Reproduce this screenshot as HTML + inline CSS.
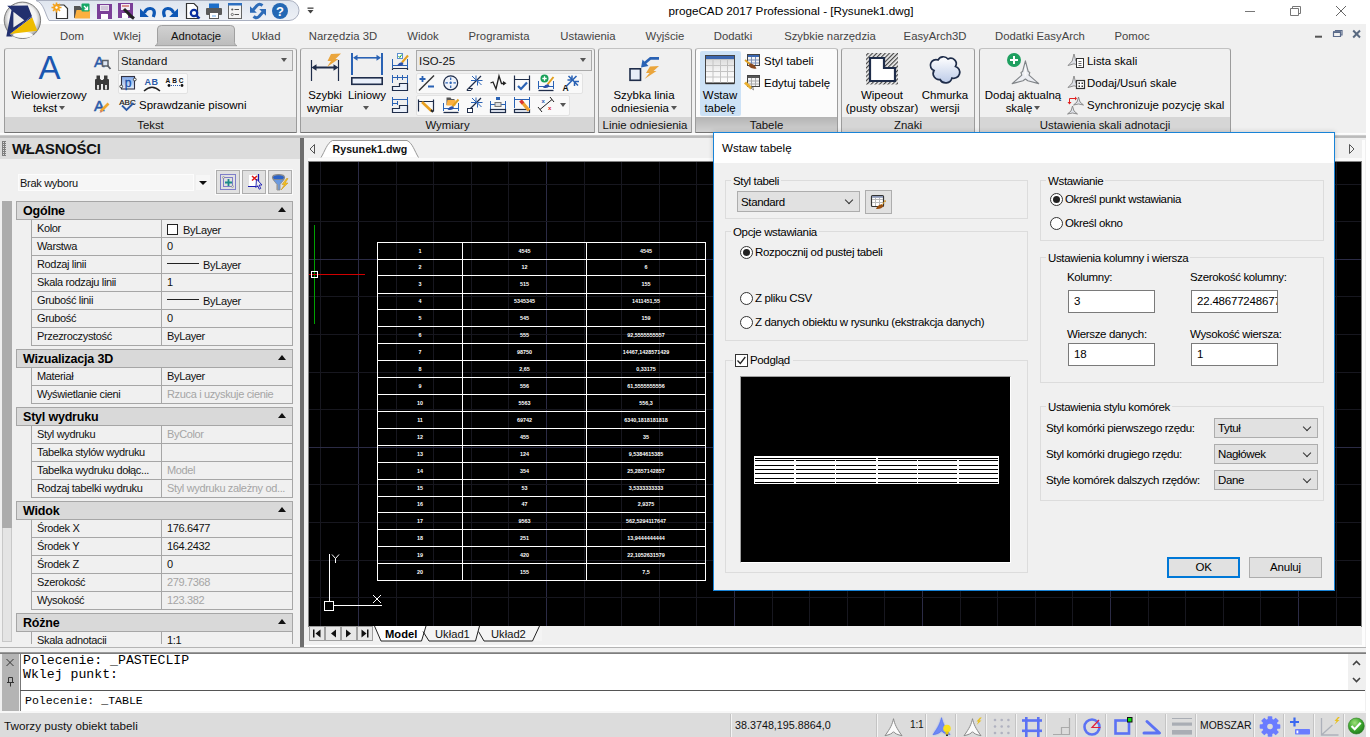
<!DOCTYPE html>
<html><head><meta charset="utf-8">
<style>
*{box-sizing:border-box;margin:0;padding:0}
html,body{width:1370px;height:737px;overflow:hidden;background:#f0f0f0;font-family:"Liberation Sans",sans-serif;font-size:12px;color:#1e1e1e}
.abs{position:absolute}
#titlebar{position:absolute;left:0;top:0;width:1370px;height:24px;background:#fff}
#title{position:absolute;left:0;top:4px;width:1582px;text-align:center;font-size:11.7px;color:#000}
#tabsrow{position:absolute;left:0;top:24px;width:1370px;height:24px;background:#f0f0f0}
.rtab{position:absolute;top:30px;font-size:11.3px;color:#444;transform:translateX(-50%);white-space:nowrap}
#ribbon{position:absolute;left:0;top:47px;width:1370px;height:88px;background:#f0f0f0}
.grp{position:absolute;top:48px;height:85px;border:1px solid #9c9c9c;border-top-color:#c2c2c2;border-bottom-color:#747474;border-radius:3px 3px 1px 1px;background:#f0f0f0}
.grp .lbl{position:absolute;left:0;right:0;bottom:0;height:15px;background:#d6d6d6;text-align:center;font-size:11.4px;line-height:16px;color:#111;white-space:nowrap}
.rt{position:absolute;font-size:11.45px;white-space:nowrap;color:#000;line-height:14px}
.rtc{text-align:center;transform:translateX(-50%)}

.darr{position:absolute;width:0;height:0;border-left:3.5px solid transparent;border-right:3.5px solid transparent;border-top:4px solid #555}
.combo{position:absolute;border:1px solid #a9a9a9;background:#e9e9e9;font-size:11.4px;line-height:21px;padding-left:2px;color:#111;white-space:nowrap}
.combo i{position:absolute;right:5px;top:7px;width:0;height:0;border-left:3.5px solid transparent;border-right:3.5px solid transparent;border-top:4px solid #555}
.strip{position:absolute;border:1px solid #e2e2e2;background:#f9f9f9;border-radius:2px}

#pgrid{position:absolute;left:0;top:0;width:300px;height:644px;overflow:hidden;font-size:11px}
.pcat{position:absolute;left:16px;width:277px;height:19px;background:#d9d9d9;border:1px solid #a6a6a6;font-weight:bold;font-size:12.5px;line-height:19px;padding-left:6px;color:#000;letter-spacing:-.2px}
.pcat i{position:absolute;right:6px;top:5px;width:0;height:0;border-left:4px solid transparent;border-right:4px solid transparent;border-bottom:5px solid #111}
.pn{position:absolute;left:31px;width:131px;height:19px;border:1px solid #a6a6a6;background:#f0f0f0;line-height:17px;padding-left:5px;white-space:nowrap;overflow:hidden;color:#111;font-size:11px;letter-spacing:-.35px}
.pv{position:absolute;left:161px;width:132px;height:19px;border:1px solid #a6a6a6;background:#f0f0f0;line-height:17px;padding-left:5px;white-space:nowrap;overflow:hidden;color:#111;font-size:11px;letter-spacing:-.35px}
.pv.dis{color:#a5a5a5}
.sw{display:inline-block;width:11px;height:11px;border:1px solid #222;background:#fff;vertical-align:-2px;margin-right:5px;position:relative;top:.5px}
.ln{display:inline-block;width:32px;height:1px;background:#222;vertical-align:4px;margin-right:4px}
.pbtn{position:absolute;top:170px;width:24px;height:24px;border:1px solid #adadad;background:#e1e1e1;box-shadow:0 0 0 1px #fafafa}

#dlg{font-size:11px;color:#000}
.gb{position:absolute;border:1px solid #dcdcdc}
.gb span{position:absolute;left:5px;top:-7px;background:#f0f0f0;padding:0 2px;font-size:11.5px;line-height:14px;white-space:nowrap;letter-spacing:-.35px}
.dt{position:absolute;font-size:11.5px;line-height:14px;white-space:nowrap;letter-spacing:-.35px}
.dcombo{position:absolute;border:1px solid #adadad;background:#e1e1e1;font-size:11.5px;padding-left:3px;line-height:20px;letter-spacing:-.35px}
.dcombo:after{content:"";position:absolute;right:7px;top:5px;width:5px;height:5px;border-right:1px solid #333;border-bottom:1px solid #333;transform:rotate(45deg)}
.dbtn{position:absolute;border:1px solid #adadad;background:#e1e1e1;text-align:center;font-size:11.5px;letter-spacing:-.2px}
.radio{position:absolute;width:13px;height:13px;border:1px solid #333;border-radius:50%;background:#fff}
.radio.on:after{content:"";position:absolute;left:2px;top:2px;width:7px;height:7px;border-radius:50%;background:#222}
.din{position:absolute;width:87px;height:23px;border:1px solid #7a7a7a;background:#fff;font-size:11.5px;line-height:20px;padding-left:5px;overflow:hidden;white-space:nowrap;letter-spacing:-.2px}

.ssep{position:absolute;top:714px;width:2px;height:23px;border-left:1px solid #c4c4c4;border-right:1px solid #f4f4f4}
</style></head><body>
<div id="titlebar"></div>
<div id="title">progeCAD 2017 Professional - [Rysunek1.dwg]</div>
<div id="tabsrow"></div>
<div id="ribbon"></div>
<!-- QAT -->
<svg class="abs" style="left:0;top:0" width="330" height="48" viewBox="0 0 330 48">
 <defs>
  <linearGradient id="qg" x1="0" y1="0" x2="0" y2="1"><stop offset="0" stop-color="#dfe5ef"/><stop offset="1" stop-color="#eef1f6"/></linearGradient>
  <radialGradient id="lg" cx=".5" cy=".45" r=".55"><stop offset="0" stop-color="#fff"/><stop offset=".7" stop-color="#f4f4f4"/><stop offset=".88" stop-color="#bdbdbd"/><stop offset="1" stop-color="#8a8a8a"/></radialGradient>
 </defs>
 <path d="M36 .5 C44 3 45 14 49 20.500 L289 20.500 A10 10 0 0 0 289 .5 Z" fill="url(#qg)" stroke="#aab0c0" stroke-width="1"/>
 <circle cx="22.400" cy="20.300" r="18.200" fill="url(#lg)" stroke="#7d7d7d" stroke-width="1"/>
 <ellipse cx="23" cy="35" rx="10" ry="3" fill="#fff" opacity=".95"/>
 <path d="M7.200 5.700 L27.800 5.500 L31.900 16.100 L9.500 33.800 L12.800 36.400 L6.300 36.400 L11.500 10 Z" fill="#22306e"/>
 <path d="M13.400 11.800 L24.300 20.300 L13.400 27.600 Z" fill="#ececec"/>
 <path d="M9.600 34 L32.200 17.300 L37.300 30.700 Z" fill="#eebc00"/>
 <path d="M9.300 33.800 L32 16.700" stroke="#14248a" stroke-width="1" fill="none"/>
 <!-- new -->
 <path d="M57 5 H64 L67.500 8.500 V18.500 H56.500 V11" fill="#fff" stroke="#333" stroke-width="1.2"/>
 <g fill="#f5a21c"><circle cx="56.500" cy="7.500" r="3.200"/><path d="M56.500 2.500v10M51.500 7.500h10M53 4l7 7M60 4l-7 7" stroke="#f5a21c" stroke-width="1.600"/></g><circle cx="56.500" cy="7.500" r="1.200" fill="#fff"/>
 <!-- open -->
 <path d="M74 6 H80 L81.500 8 H85 V18 H74Z" fill="#555"/><path d="M76.500 10 H90 V18.500 H74.500Z" fill="#fbb040"/><rect x="81.500" y="3.500" width="8" height="8" rx="1" fill="#16a765"/><path d="M84 6 L87.500 9.500 M87.500 6.500 V9.500 H84.500" stroke="#fff" stroke-width="1.300" fill="none"/>
 <!-- save -->
 <rect x="97" y="4" width="15" height="15" fill="#7b3f98"/><rect x="100" y="5" width="9" height="6" fill="#e9e3ee"/><rect x="101" y="6.500" width="7" height="1" fill="#b9a9c6"/><rect x="101" y="8.500" width="7" height="1" fill="#b9a9c6"/><rect x="101" y="14" width="7" height="5" fill="#fff"/>
 <!-- saveas -->
 <rect x="118" y="3" width="15" height="15" fill="#7b3f98"/><rect x="121" y="4" width="9" height="6" fill="#f2ecf5"/><rect x="122" y="5.500" width="7" height="1" fill="#c0392b"/><rect x="122" y="13" width="6" height="5" fill="#fff"/><path d="M124 9 L132 17 L134 18.500" stroke="#222" stroke-width="3" fill="none"/>
 <!-- undo -->
 <path d="M153.300 17 C156 10.500 153 8.300 150 8.500 C147 8.700 145 10.500 144.500 13" fill="none" stroke="#0d57b5" stroke-width="3.200"/><path d="M140 8.500 L140 17 L148.800 17 Z" fill="#0d57b5"/>
 <!-- redo -->
 <path d="M164.700 17 C162 10.500 165 8.300 168 8.500 C171 8.700 173 10.500 173.500 13" fill="none" stroke="#0d57b5" stroke-width="3.200"/><path d="M178 8.500 L178 17 L169.200 17 Z" fill="#0d57b5"/>
 <!-- preview -->
 <path d="M186.500 3.500 H194 L197.500 7 V18.500 H186.500Z" fill="#fff" stroke="#333" stroke-width="1.200"/><circle cx="194" cy="13" r="3.200" fill="#fff" stroke="#0a2fa0" stroke-width="2.200"/><path d="M196.500 15.500 L199.500 18.500" stroke="#0a2fa0" stroke-width="2.400"/>
 <!-- print -->
 <rect x="209" y="3.500" width="10" height="5" fill="#1e6fc9"/><rect x="206" y="8" width="16" height="7" rx="1" fill="#5a5a5a"/><rect x="209.500" y="12.500" width="9" height="6" fill="#fff" stroke="#5a5a5a" stroke-width="1"/><rect x="212" y="15.500" width="4" height="1" fill="#6aa7e8"/>
 <!-- props -->
 <rect x="228.500" y="3.500" width="13" height="15" fill="#f4f4f4" stroke="#666" stroke-width="1"/><rect x="228" y="3" width="14" height="2.500" fill="#2d6fc0"/><circle cx="232.300" cy="9.500" r="1.100" fill="#555"/><circle cx="232.300" cy="14.500" r="1.100" fill="none" stroke="#555" stroke-width=".8"/><path d="M234.500 9.500h4.500M234.500 14.500h4.500" stroke="#555" stroke-width="1.200"/>
 <!-- sync -->
 <path d="M262.500 5.500 C260 3.500 258.500 4 257 5.500 L253 10" fill="none" stroke="#2d6bb8" stroke-width="3"/><path d="M250 6.200 L250 12.800 L256.800 12.800 Z" fill="#2d6bb8"/>
 <path d="M253.500 16.500 C256 18.500 257.500 18 259 16.500 L263 12" fill="none" stroke="#2d6bb8" stroke-width="3"/><path d="M266 15.700 L266 9.100 L259.200 9.100 Z" fill="#2d6bb8"/>
 <!-- help -->
 <circle cx="280" cy="11" r="8" fill="#2468b4"/><text x="280" y="15.600" font-family="Liberation Sans,sans-serif" font-weight="bold" font-size="13" fill="#fff" text-anchor="middle">?</text>
 <!-- dd -->
 <rect x="307.500" y="7.500" width="6" height="1.300" fill="#444"/><path d="M307.500 10 h6 l-3 3.500z" fill="#444"/>
</svg>
<!-- window controls -->
<svg class="abs" style="left:1230px;top:0" width="140" height="48" viewBox="0 0 140 48">
 <path d="M15 11.500h10" stroke="#777" stroke-width="1"/>
 <path d="M60.500 8.500h8v7h-8z M62.500 8.500v-2h8v7h-2" fill="none" stroke="#777" stroke-width="1"/>
 <path d="M106 6l10 10M116 6l-10 10" stroke="#666" stroke-width="1"/>
 <path d="M85 36.700h7" stroke="#555" stroke-width="2"/>
 <path d="M103.500 32.500h7v4h-7z" fill="none" stroke="#5a6a8a" stroke-width="1.200"/><path d="M103 32h8" stroke="#5a6a8a" stroke-width="1.800"/><path d="M105.500 31 v-.5 h6.500 v4.500 h-1.500" fill="none" stroke="#5a6a8a" stroke-width="1.200"/>
 <path d="M123.200 30.500l6.800 7M130 30.500l-6.800 7" stroke="#5a6a80" stroke-width="2"/>
</svg>
<!-- tabs -->
<svg class="abs" style="left:150px;top:23px" width="100" height="26" viewBox="0 0 100 26">
 <defs><linearGradient id="tg" x1="0" y1="0" x2="0" y2="1"><stop offset="0" stop-color="#d2d2d2"/><stop offset="1" stop-color="#bcbcbc"/></linearGradient></defs>
 <path d="M5 22.700 Q7.500 22.500 7.500 19.500 V6 Q7.500 2.500 11.500 2.500 H80.500 Q84.500 2.500 84.500 6 V19.500 Q84.500 22.500 87 22.700 Z" fill="url(#tg)" stroke="#a0a0a0" stroke-width="1"/>
</svg>
<div class="rtab" style="left:72px">Dom</div>
<div class="rtab" style="left:127px">Wklej</div>
<div class="rtab" style="left:196px;color:#111">Adnotacje</div>
<div class="rtab" style="left:266px">Układ</div>
<div class="rtab" style="left:343px">Narzędzia 3D</div>
<div class="rtab" style="left:423px">Widok</div>
<div class="rtab" style="left:499px">Programista</div>
<div class="rtab" style="left:588px">Ustawienia</div>
<div class="rtab" style="left:665px">Wyjście</div>
<div class="rtab" style="left:733px">Dodatki</div>
<div class="rtab" style="left:830px">Szybkie narzędzia</div>
<div class="rtab" style="left:935px">EasyArch3D</div>
<div class="rtab" style="left:1040px">Dodatki EasyArch</div>
<div class="rtab" style="left:1132px">Pomoc</div>

<!-- groups -->
<div class="grp" style="left:4px;width:293px"><div class="lbl">Tekst</div></div>
<div class="grp" style="left:300px;width:295px"><div class="lbl">Wymiary</div></div>
<div class="grp" style="left:598px;width:94px"><div class="lbl">Linie odniesienia</div></div>
<div class="grp" style="left:695px;width:143px;background:#fbfbfb"><div class="lbl" style="background:linear-gradient(#b4b4b4,#d2d2d2)">Tabele</div></div>
<div class="grp" style="left:841px;width:134px"><div class="lbl">Znaki</div></div>
<div class="grp" style="left:979px;width:252px"><div class="lbl">Ustawienia skali adnotacji</div></div>
<!-- Tekst group -->
<div class="rt rtc" style="left:49px;top:88px">Wielowierzowy</div>
<div class="rt rtc" style="left:45px;top:101px">tekst</div>
<div class="darr" style="left:59px;top:106px"></div>
<div class="combo" style="left:118px;top:50px;width:175px;height:21px">Standard<i></i></div>
<div class="strip" style="left:118px;top:73px;width:70px;height:21px"></div>
<div class="rt" style="left:139px;top:98px">Sprawdzanie pisowni</div>
<!-- Wymiary group -->
<div class="rt rtc" style="left:325px;top:88px">Szybki</div>
<div class="rt rtc" style="left:325px;top:101px">wymiar</div>
<div class="rt rtc" style="left:367px;top:88px">Liniowy</div>
<div class="darr" style="left:363px;top:106px"></div>
<div class="combo" style="left:416px;top:50px;width:176px;height:21px">ISO-25<i></i></div>
<div class="strip" style="left:416px;top:73px;width:167px;height:21px"></div>
<div class="strip" style="left:416px;top:95px;width:154px;height:21px"></div>
<div class="darr" style="left:560px;top:103px"></div>
<!-- Linie odniesienia -->
<div class="rt rtc" style="left:644px;top:88px">Szybka linia</div>
<div class="rt rtc" style="left:640px;top:101px">odniesienia</div>
<div class="darr" style="left:671px;top:106px"></div>
<!-- Tabele -->
<div class="abs" style="left:700px;top:51px;width:41px;height:65px;background:#cde2f6;border-radius:2px"></div>
<div class="rt rtc" style="left:720px;top:88px">Wstaw</div>
<div class="rt rtc" style="left:720px;top:101px">tabelę</div>
<div class="rt" style="left:764px;top:54px">Styl tabeli</div>
<div class="rt" style="left:764px;top:76px">Edytuj tabelę</div>
<!-- Znaki -->
<div class="rt rtc" style="left:882px;top:88px">Wipeout</div>
<div class="rt rtc" style="left:882px;top:101px">(pusty obszar)</div>
<div class="rt rtc" style="left:945px;top:88px">Chmurka</div>
<div class="rt rtc" style="left:945px;top:101px">wersji</div>
<!-- Ust skali -->
<div class="rt rtc" style="left:1023px;top:88px">Dodaj aktualną</div>
<div class="rt rtc" style="left:1019px;top:101px">skalę</div>
<div class="darr" style="left:1034px;top:106px"></div>
<div class="rt" style="left:1087px;top:54px">Lista skali</div>
<div class="rt" style="left:1087px;top:76px">Dodaj/Usuń skale</div>
<div class="rt" style="left:1087px;top:98px">Synchronizuje pozycję skal</div>
<svg class="abs" style="left:0;top:48px" width="1240" height="70" viewBox="0 48 1240 70">
<defs>
 <linearGradient id="pg" x1="0" y1="0" x2="0" y2="1"><stop offset="0" stop-color="#7fa6e6"/><stop offset="1" stop-color="#e8effb"/></linearGradient>
 <pattern id="hatch" width="3" height="3" patternUnits="userSpaceOnUse" patternTransform="rotate(-45)"><rect width="3" height="1.200" fill="#444"/></pattern>
 <g id="bolt"><path d="M6 0 L0 7 H3.500 L1 12 L9 4.500 H5.200 L9 0Z" fill="#f2a73a"/></g>
</defs>
<g font-family="Liberation Sans,sans-serif">
<!-- big A -->
<text x="49.500" y="79" font-size="33" fill="#1b57b0" text-anchor="middle">A</text>
<!-- A search -->
<text x="94" y="67" font-size="15.500" fill="#2a5aa8" stroke="#2a5aa8" stroke-width=".5">A</text><rect x="102.500" y="60.500" width="5.500" height="5.500" fill="#dde6f4" stroke="#5a5f68" stroke-width="1.500"/><path d="M107.500 65.500l3 3.500" stroke="#5a5f68" stroke-width="1.800"/>
<!-- binoculars -->
<g fill="#3a3a3a"><rect x="95" y="79" width="6" height="11" rx="1"/><rect x="103" y="79" width="6" height="11" rx="1"/><rect x="96.500" y="75.500" width="3.500" height="5"/><rect x="104" y="75.500" width="3.500" height="5"/><rect x="100" y="80" width="4" height="4"/></g><rect x="97" y="85" width="2" height="4.500" fill="#ddd"/><rect x="105" y="85" width="2" height="4.500" fill="#ddd"/>
<!-- A pencil -->
<text x="94" y="111" font-size="15.500" fill="#2a5aa8" stroke="#2a5aa8" stroke-width=".5">A</text><path d="M100.500 111.500l8-8" stroke="#f0a830" stroke-width="2.600"/><path d="M99.500 113l1.500-3l1.500 1.500z" fill="#c77"/>
<!-- p icon -->
<rect x="121.500" y="76.500" width="13" height="12.500" fill="url(#pg)" stroke="#334" stroke-width="1.100"/><text x="128" y="86.500" font-size="12" fill="#1b4fa8" text-anchor="middle" stroke="#1b4fa8" stroke-width=".3">p</text><circle cx="134.800" cy="79.500" r="1.400" fill="#fff" stroke="#222" stroke-width=".8"/><circle cx="121.200" cy="86.500" r="1.400" fill="#fff" stroke="#222" stroke-width=".8"/>
<!-- AB arc -->
<text x="151.500" y="85" font-size="9" font-weight="bold" fill="#2a5aa8" text-anchor="middle" letter-spacing=".5">AB</text><path d="M144 91 Q152 83.500 160 91" fill="none" stroke="#222" stroke-width="1.500"/>
<!-- ABC dots -->
<text x="175.500" y="82.500" font-size="6.500" font-weight="bold" fill="#111" text-anchor="middle" letter-spacing="2">ABC</text><circle cx="169" cy="85.500" r="1.400" fill="#111"/><circle cx="182" cy="85.500" r="1.400" fill="#111"/><path d="M171 85.500h9" stroke="#2a5aa8" stroke-width="1" stroke-dasharray="1 1"/>
<!-- ABC check -->
<text x="127.500" y="105" font-size="8" fill="#111" text-anchor="middle" stroke="#111" stroke-width=".2">ABC</text><path d="M122 105.500l4.500 4.500l7-7" fill="none" stroke="#2a5aa8" stroke-width="1.800"/>
<!-- Szybki wymiar -->
<g stroke="#1f2d4a" fill="none"><path d="M311.500 60v21M338.500 60v21" stroke-width="1.200"/><path d="M314 67.500h22" stroke-width="2"/></g>
<path d="M311.500 67.500l5-3.200v6.400zM338.500 67.500l-5-3.200v6.400z" fill="#1f2d4a"/>
<path d="M331 54 L341 53.500 L335.500 59 L338.500 59 L327 67 L331 61 L327.500 61Z" fill="#eaa53c"/>
<!-- Liniowy -->
<g stroke="#2a62b4" fill="none"><path d="M352 53v22M382 53v22" stroke-width="2"/><path d="M355 57.800h24" stroke-width="1.600"/></g>
<path d="M353 57.800l4.500-3v6zM381 57.800l-4.500-3v6z" fill="#2a62b4"/>
<rect x="351.800" y="77.800" width="30.400" height="6.500" fill="#eaf0fa" stroke="#1f2d4a" stroke-width="1.600"/>
<!-- small col 1 -->
<g stroke="#2a62b4" stroke-width="1" fill="none"><path d="M392.500 59v9M407.500 59v9M392.500 65.500h15"/></g><path d="M392.500 68.500h15v1.500M392.500 68.500v1.500" stroke="#1f2d4a" stroke-width="1.200" fill="none"/>
<rect x="397.500" y="53.500" width="5" height="5" fill="#fff" stroke="#5a8fd0" stroke-width="1"/><path d="M398.500 56l1.300 1.500l2-3" stroke="#2a2" stroke-width="1" fill="none"/>
<path d="M408 55.500l-6 7" stroke="#e2a020" stroke-width="2"/><path d="M397 65.500q3-4 5.500-3l1 1.500q-2 3-6.500 1.500z" fill="#2a4fa8"/>
<!-- small col 2 -->
<g stroke="#2a62b4" stroke-width="1" fill="none"><path d="M392.500 75v8M397.500 75v5M402.500 75v5M407.500 75v8M392.500 77.500h15"/></g>
<path d="M392.500 90.500v-4h7v-3h8v7z" fill="#eaf0fa" stroke="#1f2d4a" stroke-width="1.200"/>
<!-- small col 3 -->
<g stroke="#2a62b4" stroke-width="1" fill="none"><path d="M392.500 97v9M397.500 101v4M407.500 97v8M392.500 99.500h15M392.500 103.500h5"/></g>
<path d="M392.500 112.500v-4h7v-3h8v7z" fill="#eaf0fa" stroke="#1f2d4a" stroke-width="1.200"/>
<!-- row1: 1 plus/minus -->
<path d="M419 90.500l15-15" stroke="#333" stroke-width="1.400"/><path d="M419.500 79h6M422.500 76v6M428 86.500h6" stroke="#2a62b4" stroke-width="1.800"/>
<!-- 2 circle -->
<circle cx="450.700" cy="82.800" r="7" fill="#eef2fa" stroke="#1f2d4a" stroke-width="1.200"/><path d="M450.700 77.500v10.600M445.400 82.800h10.600" stroke="#2a62b4" stroke-width="1.200" stroke-dasharray="2.500 1.500"/>
<!-- 3 -->
<path d="M467 90l14-14" stroke="#1f2d4a" stroke-width="1.200"/><path d="M472 76l4.500 4.500M476 75.500v5h-5M481.500 85l-4.500-4.500M477.500 85.500v-5h5" stroke="#2a62b4" stroke-width="1" fill="none"/><path d="M467 90.500l1.500-2h4l-1.500 2z" fill="#fff" stroke="#1f2d4a" stroke-width="1"/>
<!-- 4 zigzag -->
<path d="M490.500 83l2.500-1l3 7l3-13l2.500 7.500h3.500" fill="none" stroke="#222" stroke-width="1.300"/><path d="M506.500 83.300l-3.500-2.300v4.600z" fill="#222"/>
<!-- 5 dim check -->
<path d="M514.500 75.500v15M529.500 75.500v15M514.500 79.500h15" stroke="#1f2d4a" stroke-width="1.200" fill="none"/><path d="M518 86l3 3l6-6.500" stroke="#2a62b4" stroke-width="2.200" fill="none"/>
<!-- 6 dim plus brush -->
<g stroke="#2a62b4" stroke-width="1" fill="none"><path d="M538.500 81v8M553.500 81v8M538.500 86.500h15"/></g><path d="M538.500 90.500h15" stroke="#1f2d4a" stroke-width="1.300"/>
<path d="M553.500 77l-6 7.500" stroke="#e2a020" stroke-width="2"/><path d="M543 87.500q3-4 5.500-3l1 1.500q-2 3-6.500 1.500z" fill="#2a4fa8"/>
<circle cx="544.500" cy="78.500" r="4" fill="#18a058"/><path d="M542.300 78.500h4.400M544.500 76.300v4.400" stroke="#fff" stroke-width="1.300"/>
<!-- 7 -->
<path d="M566.500 86l10-10" stroke="#2a62b4" stroke-width="1.600"/><path d="M568.500 76l5 5M572 75.500v4.500h-4.500M578 85.500l-5-5M574.500 86v-4.500h4.500" stroke="#2a62b4" stroke-width="1.500" fill="none"/>
<text x="562.500" y="91" font-size="8.500" font-weight="bold" fill="#111">A</text>
<!-- row2: 1 dim pencil -->
<path d="M418.500 99.500v12M433.500 99.500v12M418.500 101.500h15" stroke="#1f2d4a" stroke-width="1.200" fill="none"/><path d="M422 102l9.500 9" stroke="#eaa020" stroke-width="2.600"/><path d="M431 110l2 2" stroke="#222" stroke-width="2"/>
<!-- 2 folder brush -->
<g stroke="#2a62b4" stroke-width="1" fill="none"><path d="M443.500 103v8M458.500 103v8M443.500 108.500h15"/></g><path d="M443.500 112.500h15" stroke="#1f2d4a" stroke-width="1.300"/>
<path d="M446.500 97.500h4l1 1.500h3v6h-8z" fill="#555"/><path d="M447.500 100h8v5.500h-9z" fill="#fbb040"/>
<path d="M458.500 99.500l-6 7" stroke="#e2a020" stroke-width="2"/><path d="M447.500 109.500q3-4 5.500-3l1 1.500q-2 3-6.500 1.500z" fill="#2a4fa8"/>
<!-- 3 -->
<path d="M468 111l13-13" stroke="#1f2d4a" stroke-width="1.200"/><path d="M472 98l4.500 4.500M476 97.500v5h-5M481.500 107l-4.500-4.500M477.500 107.500v-5h5" stroke="#2a62b4" stroke-width="1" fill="none"/><rect x="467.500" y="108.500" width="5" height="4" fill="#fff" stroke="#1f2d4a" stroke-width="1"/>
<!-- 4 -->
<g stroke="#2a62b4" stroke-width="1" fill="none"><path d="M490.500 101v8M505.500 101v8M490.500 104.500h15"/></g><rect x="490.500" y="109.500" width="15" height="3" fill="#eaf0fa" stroke="#1f2d4a" stroke-width="1.200"/>
<rect x="496" y="97" width="4" height="3" fill="#2a62b4"/><rect x="495" y="102.500" width="6" height="4" fill="#ddd" stroke="#777" stroke-width="1"/>
<!-- 5 -->
<g stroke="#2a62b4" stroke-width="1" fill="none"><path d="M514.500 97v11M529.500 97v11M514.500 99.500h15"/></g><rect x="514.500" y="109.500" width="15" height="3" fill="#eaf0fa" stroke="#1f2d4a" stroke-width="1.200"/>
<path d="M521 101l8 9.500" stroke="#f0a030" stroke-width="3.400"/><path d="M520.500 100.500l2.500 3" stroke="#d33" stroke-width="3.400"/>
<!-- 6 -->
<path d="M540 109.500l12-10" stroke="#222" stroke-width="1"/><path d="M538 107l4 5M550 97l4 5" stroke="#222" stroke-width="1"/>
<text x="541.500" y="103" font-size="6" font-weight="bold" fill="#2a62b4">x</text><text x="548" y="110" font-size="6" font-weight="bold" fill="#d22">x</text>

<!-- Szybka linia -->
<rect x="630" y="68.800" width="10.500" height="11.500" fill="#e6ecf7" stroke="#1f2d4a" stroke-width="1.600"/>
<path d="M659 58.300h-8.500l-6.500 5.500" fill="none" stroke="#2a62b4" stroke-width="2.800"/><path d="M641 67.500l1.500-8l6 6.500z" fill="#2a62b4"/>
<path d="M650 66.500 L659 66 L653.500 71 L656.500 71 L644.500 79 L649.500 73 L646 73Z" fill="#eaa53c"/>
<!-- Wstaw tabele icon -->
<defs><linearGradient id="tbg" x1="0" y1="0" x2="0" y2="1"><stop offset="0" stop-color="#d4d4d4"/><stop offset=".5" stop-color="#f2f2f2"/><stop offset="1" stop-color="#fff"/></linearGradient></defs>
<rect x="705.500" y="55.500" width="29" height="27.500" fill="url(#tbg)" stroke="#444" stroke-width="1"/>
<rect x="706" y="56" width="28" height="3.500" fill="#3a66b0"/>
<path d="M706 59.500h28M706 65.500h28M706 71.500h28M706 77h28M713 60v23M720.500 60v23M727.500 60v23" stroke="#c4c4c4" stroke-width="1" fill="none"/>
<path d="M705.500 83.500h29" stroke="#333" stroke-width="1.400"/>
<!-- Styl tabeli -->
<rect x="747.500" y="54.500" width="12" height="11" fill="#f4f4f4" stroke="#444" stroke-width="1"/><rect x="748" y="55" width="11" height="2" fill="#3a66b0"/><path d="M748 60h11M748 63h11M751.500 57v8M755.500 57v8" stroke="#7a8fb8" stroke-width="1"/>
<path d="M745 60l6 5" stroke="#e2a020" stroke-width="1.800"/><path d="M750 63.500q4 0 6.500 5q-5 1-8-2.500z" fill="#8a4a20"/>
<!-- Edytuj tabele -->
<rect x="747.500" y="75.500" width="12" height="11" fill="#f4f4f4" stroke="#444" stroke-width="1"/><rect x="748" y="76" width="11" height="2" fill="#555"/><path d="M748 81h11M748 84h11M751.500 78v8M755.500 78v8" stroke="#aaa" stroke-width="1"/>
<path d="M745 82.500l6.500 6" stroke="#eab030" stroke-width="3"/><path d="M751 88l2.500 2l-.5-3z" fill="#fff" stroke="#555" stroke-width=".6"/>
<!-- Wipeout -->
<rect x="866" y="53" width="32" height="31.500" fill="url(#hatch)"/>
<path d="M870 58H884V68H895V81H870Z" fill="#fff" stroke="#1f2d4a" stroke-width="2.200"/>
<!-- Cloud -->
<defs><linearGradient id="cg" x1="0" y1="0" x2="0" y2="1"><stop offset="0" stop-color="#fff"/><stop offset="1" stop-color="#bccbe8"/></linearGradient></defs>
<path d="M938 60 A6 6 0 0 1 948 59 A5.500 5.500 0 0 1 955.500 66.500 A6 6 0 0 1 952 78 A6.500 6.500 0 0 1 940 79.500 A6 6 0 0 1 934 70.500 A5.500 5.500 0 0 1 938 60Z" fill="url(#cg)" stroke="#1f2d4a" stroke-width="1.700"/>
<!-- Scale star -->
<g id="star3"><path d="M1025.400 60.800 L1028.200 71.500 L1029.800 72.500 L1029 75.200 L1038.700 83.600 L1027.800 80.800 L1025.400 79 L1023 80.800 L1012.100 83.600 L1021.800 75.200 L1021 72.500 L1022.600 71.500 Z" fill="#eceef3" stroke="#808488" stroke-width="1.100" stroke-linejoin="round"/><path d="M1025.400 65 L1026.500 74 L1025.400 77 L1024.300 74Z" fill="#fafafa"/></g>
<circle cx="1014" cy="60" r="7" fill="#1fa060"/><path d="M1010 60h8M1014 56v8" stroke="#fff" stroke-width="2"/>
<!-- small star icons -->
<g fill="#dfe2e8" stroke="#777" stroke-width=".8" stroke-linejoin="round">
<path d="M1074 54 L1075.800 61 L1080 65.500 L1074 63.800 L1068 65.500 L1072.200 61Z"/>
<path d="M1074 76 L1075.800 83 L1080 87.500 L1074 85.800 L1068 87.500 L1072.200 83Z"/>
<path d="M1078.500 97 L1080 102 L1083.500 105 L1078.500 104 L1073.500 105 L1077 102Z"/>
<path d="M1072.500 106 L1074 111 L1077.500 114 L1072.500 113 L1067.500 114 L1071 111Z"/>
</g>
<rect x="1076.500" y="58.500" width="7" height="9" fill="#fff" stroke="#333" stroke-width="1"/><path d="M1078.500 61.500h3M1078.500 63.500h3M1078.500 65.500h3" stroke="#444" stroke-width=".8"/>
<rect x="1076.500" y="80.500" width="8" height="8" fill="#fff" stroke="#333" stroke-width="1.200"/><path d="M1078.500 82.500h1.500v1.500h-1.500zM1081.500 82.500h1.500v1.500h-1.500zM1078.500 85.500h1.500v1.500h-1.500zM1081.500 85.500h1.500v1.500h-1.500z" fill="#333"/>
<path d="M1069.500 103v-4.500h6" fill="none" stroke="#e02020" stroke-width="1"/><path d="M1075 96.500l2 2l-2 2zM1067.500 102l2 2.500l2-2.500z" fill="#e02020"/>

</g>
</svg>


<div id="props">
<div class="abs" style="left:0;top:133px;width:1370px;height:2px;background:linear-gradient(#fdfdfd 70%,#e6e6e6)"></div>
<div class="abs" style="left:0;top:135px;width:1370px;height:3px;background:linear-gradient(#d4d4d4,#b6b6b6 60%,#c4c4c4)"></div>
<div class="abs" style="left:0;top:138px;width:300px;height:21px;background:#dcdcdc"></div>
<div class="abs" style="left:2px;top:141px;width:4px;height:15px;background:repeating-linear-gradient(#555 0 1px,transparent 1px 2px),repeating-linear-gradient(90deg,#555 0 1px,#dcdcdc 1px 2px);background-blend-mode:normal;opacity:.7"></div>
<div class="abs" style="left:12px;top:141px;font-size:14.8px;font-weight:bold;color:#111;letter-spacing:-.2px">WŁASNOŚCI</div>
<div class="abs" style="left:300px;top:138px;width:4px;height:510px;background:#6e6e6e"></div>
<div class="abs" style="left:18px;top:174px;width:176px;height:17px;background:#f6f6f6;border:1px solid #fcfcfc;font-size:11px;line-height:17px;padding-left:1px;color:#111;letter-spacing:-.3px">Brak wyboru</div>
<div class="abs" style="left:196px;top:175px;width:14px;height:15px;background:#f6f6f6"></div>
<div class="abs" style="left:199px;top:181px;width:0;height:0;border-left:4px solid transparent;border-right:4px solid transparent;border-top:4px solid #111"></div>
<div class="pbtn" style="left:216px"></div><div class="pbtn" style="left:242px"></div><div class="pbtn" style="left:268px"></div>
<svg class="abs" style="left:216px;top:170px" width="76" height="24" viewBox="216 170 76 24">
<rect x="220.500" y="174.500" width="15" height="15" fill="none" stroke="#1a1ab0" stroke-width="1" stroke-dasharray="1 1"/>
<rect x="223.500" y="177.500" width="9" height="9" fill="none" stroke="#1a1ab0" stroke-width="1" stroke-dasharray="1 1"/>
<path d="M225 182.500h7M228.500 179v7" stroke="#1a8a8a" stroke-width="1.800"/>
<circle cx="232.500" cy="186.500" r="1" fill="#ddd" stroke="#777" stroke-width=".5"/><circle cx="223.500" cy="177.500" r="1" fill="#ddd" stroke="#777" stroke-width=".5"/>
<rect x="249" y="175" width="8" height="11" fill="#fff"/>
<path d="M258.500 174v12.500h-10.500" fill="none" stroke="#1a1ab0" stroke-width="1.200"/>
<path d="M252 176l5 4.500M257 176l-5 4.500" stroke="#e01818" stroke-width="1.500"/>
<path d="M256.500 179l5.500 6h-2.800l1.500 3.500l-1.500.7l-1.500-3.500l-1.800 1.800z" fill="#eee" stroke="#1a1ab0" stroke-width=".9"/>
<ellipse cx="278.500" cy="177.500" rx="6" ry="2.800" fill="#2a62c8" stroke="#888" stroke-width="1.200"/>
<path d="M273 179.500l4 5v5.500h3v-5.500l4-5z" fill="#6a9ae0" stroke="#888" stroke-width=".8"/>
<path d="M277.500 184.500v5.500" stroke="#999" stroke-width="1.500"/>
<path d="M286.500 178.500l-4.500 6h2.500l-3.500 5.500l7-7h-2.800l2.800-4.500z" fill="#f4c020" stroke="#c89010" stroke-width=".5"/>
</svg>
<div class="abs" style="left:2px;top:201px;width:10px;height:327px;background:#acacac"></div>
<div class="abs" style="left:2px;top:528px;width:10px;height:114px;background:#e4e4e4;border:1px solid #c8c8c8;border-top:0"></div>
<div id="pgrid">
<div class="pcat" style="top:201px">Ogólne<i></i></div>
<div class="pn" style="top:219px">Kolor</div><div class="pv" style="top:219px"><span class="sw"></span><span style="position:relative;top:1.5px">ByLayer</span></div>
<div class="pn" style="top:237px">Warstwa</div><div class="pv" style="top:237px">0</div>
<div class="pn" style="top:255px">Rodzaj linii</div><div class="pv" style="top:255px"><span class="ln"></span><span style="position:relative;top:1px">ByLayer</span></div>
<div class="pn" style="top:273px">Skala rodzaju linii</div><div class="pv" style="top:273px">1</div>
<div class="pn" style="top:291px">Grubość linii</div><div class="pv" style="top:291px"><span class="ln"></span><span style="position:relative;top:1px">ByLayer</span></div>
<div class="pn" style="top:309px">Grubość</div><div class="pv" style="top:309px">0</div>
<div class="pn" style="top:327px">Przezroczystość</div><div class="pv" style="top:327px">ByLayer</div>
<div class="pcat" style="top:349px">Wizualizacja 3D<i></i></div>
<div class="pn" style="top:367px">Materiał</div><div class="pv" style="top:367px">ByLayer</div>
<div class="pn" style="top:385px">Wyświetlanie cieni</div><div class="pv dis" style="top:385px">Rzuca i uzyskuje cienie</div>
<div class="pcat" style="top:407px">Styl wydruku<i></i></div>
<div class="pn" style="top:425px">Styl wydruku</div><div class="pv dis" style="top:425px">ByColor</div>
<div class="pn" style="top:443px">Tabelka stylów wydruku</div><div class="pv" style="top:443px"></div>
<div class="pn" style="top:461px">Tabelka wydruku dołąc...</div><div class="pv dis" style="top:461px">Model</div>
<div class="pn" style="top:479px">Rodzaj tabelki wydruku</div><div class="pv dis" style="top:479px">Styl wydruku zależny od...</div>
<div class="pcat" style="top:501px">Widok<i></i></div>
<div class="pn" style="top:519px">Środek X</div><div class="pv" style="top:519px">176.6477</div>
<div class="pn" style="top:537px">Środek Y</div><div class="pv" style="top:537px">164.2432</div>
<div class="pn" style="top:555px">Środek Z</div><div class="pv" style="top:555px">0</div>
<div class="pn" style="top:573px">Szerokość</div><div class="pv dis" style="top:573px">279.7368</div>
<div class="pn" style="top:591px">Wysokość</div><div class="pv dis" style="top:591px">123.382</div>
<div class="pcat" style="top:613px">Różne<i></i></div>
<div class="pn" style="top:631px">Skala adnotacji</div><div class="pv" style="top:631px">1:1</div>
</div>
<div class="abs" style="left:0;top:644px;width:300px;height:9px;background:#f0f0f0"></div>
</div>

<div id="draw">
<div class="abs" style="left:304px;top:138px;width:1066px;height:515px;background:#f0f0f0"></div>
<div class="abs" style="left:308px;top:158px;width:1054px;height:3px;background:#fafafa"></div>
<div class="abs" style="left:308px;top:161px;width:1054px;height:466px;background:#828282"></div>
<div class="abs" style="left:1362px;top:140px;width:3px;height:505px;background:#fdfdfd"></div>
<div class="abs" style="left:304px;top:645px;width:1061px;height:2px;background:#fdfdfd"></div>
<svg class="abs" style="left:308px;top:138px" width="130" height="24" viewBox="0 0 130 24">
 <path d="M6.500 6.500v9l-4.500-4.500z" fill="none" stroke="#555" stroke-width="1"/>
 <path d="M13 19.500 C17 13 19 5 24.500 2.500 H99 C104.500 5 106.500 13 110.500 19.500 Z" fill="#fff"/>
 <path d="M13 19.500 C17 13 19 5 24.500 2.500 H99 C104.500 5 106.500 13 110.500 19.500" fill="none" stroke="#9a9a9a" stroke-width="1"/>
 <text x="24.500" y="14.500" font-family="Liberation Sans,sans-serif" font-weight="bold" font-size="10.600" letter-spacing=".05" fill="#111">Rysunek1.dwg</text>
</svg>
<svg class="abs" style="left:1342px;top:138px" width="22" height="24" viewBox="0 0 22 24"><path d="M7.500 6.500v9l4.500-4.500z" fill="none" stroke="#555" stroke-width="1"/></svg>
<svg class="abs" style="left:309px;top:162px" width="1052" height="464" viewBox="309 162 1052 464" shape-rendering="crispEdges">
<rect x="309" y="162" width="1052" height="464" fill="#000"/>
<rect x="320" y="162" width="1" height="464" fill="#17171f"/>
<rect x="358" y="162" width="1" height="464" fill="#2b2b45"/>
<rect x="396" y="162" width="1" height="464" fill="#17171f"/>
<rect x="433" y="162" width="1" height="464" fill="#17171f"/>
<rect x="471" y="162" width="1" height="464" fill="#17171f"/>
<rect x="508" y="162" width="1" height="464" fill="#17171f"/>
<rect x="546" y="162" width="1" height="464" fill="#2b2b45"/>
<rect x="584" y="162" width="1" height="464" fill="#17171f"/>
<rect x="621" y="162" width="1" height="464" fill="#17171f"/>
<rect x="659" y="162" width="1" height="464" fill="#17171f"/>
<rect x="696" y="162" width="1" height="464" fill="#17171f"/>
<rect x="734" y="162" width="1" height="464" fill="#2b2b45"/>
<rect x="772" y="162" width="1" height="464" fill="#17171f"/>
<rect x="809" y="162" width="1" height="464" fill="#17171f"/>
<rect x="847" y="162" width="1" height="464" fill="#17171f"/>
<rect x="884" y="162" width="1" height="464" fill="#17171f"/>
<rect x="922" y="162" width="1" height="464" fill="#2b2b45"/>
<rect x="960" y="162" width="1" height="464" fill="#17171f"/>
<rect x="997" y="162" width="1" height="464" fill="#17171f"/>
<rect x="1035" y="162" width="1" height="464" fill="#17171f"/>
<rect x="1072" y="162" width="1" height="464" fill="#17171f"/>
<rect x="1110" y="162" width="1" height="464" fill="#2b2b45"/>
<rect x="1148" y="162" width="1" height="464" fill="#17171f"/>
<rect x="1185" y="162" width="1" height="464" fill="#17171f"/>
<rect x="1223" y="162" width="1" height="464" fill="#17171f"/>
<rect x="1260" y="162" width="1" height="464" fill="#17171f"/>
<rect x="1298" y="162" width="1" height="464" fill="#2b2b45"/>
<rect x="1336" y="162" width="1" height="464" fill="#17171f"/>
<rect x="309" y="184" width="1052" height="1" fill="#17171f"/>
<rect x="309" y="221" width="1052" height="1" fill="#17171f"/>
<rect x="309" y="259" width="1052" height="1" fill="#2b2b45"/>
<rect x="309" y="296" width="1052" height="1" fill="#17171f"/>
<rect x="309" y="334" width="1052" height="1" fill="#17171f"/>
<rect x="309" y="372" width="1052" height="1" fill="#17171f"/>
<rect x="309" y="409" width="1052" height="1" fill="#17171f"/>
<rect x="309" y="447" width="1052" height="1" fill="#2b2b45"/>
<rect x="309" y="484" width="1052" height="1" fill="#17171f"/>
<rect x="309" y="522" width="1052" height="1" fill="#17171f"/>
<rect x="309" y="560" width="1052" height="1" fill="#17171f"/>
<rect x="309" y="597" width="1052" height="1" fill="#17171f"/>
<rect x="314" y="225" width="1" height="99" fill="#00a000"/>
<rect x="309" y="274" width="56" height="1" fill="#d00000"/>
<rect x="311.5" y="271.5" width="6" height="6" fill="none" stroke="#fff" stroke-width="1"/>
<g fill="#fff">
<rect x="377" y="242" width="329" height="1"/>
<rect x="377" y="259" width="329" height="1"/>
<rect x="377" y="275" width="329" height="1"/>
<rect x="377" y="293" width="329" height="1"/>
<rect x="377" y="309" width="329" height="1"/>
<rect x="377" y="326" width="329" height="1"/>
<rect x="377" y="343" width="329" height="1"/>
<rect x="377" y="360" width="329" height="1"/>
<rect x="377" y="377" width="329" height="1"/>
<rect x="377" y="394" width="329" height="1"/>
<rect x="377" y="411" width="329" height="1"/>
<rect x="377" y="428" width="329" height="1"/>
<rect x="377" y="445" width="329" height="1"/>
<rect x="377" y="462" width="329" height="1"/>
<rect x="377" y="479" width="329" height="1"/>
<rect x="377" y="496" width="329" height="1"/>
<rect x="377" y="512" width="329" height="1"/>
<rect x="377" y="529" width="329" height="1"/>
<rect x="377" y="546" width="329" height="1"/>
<rect x="377" y="563" width="329" height="1"/>
<rect x="377" y="580" width="329" height="1"/>
<rect x="377" y="242" width="1" height="339"/>
<rect x="462" y="242" width="1" height="339"/>
<rect x="586" y="242" width="1" height="339"/>
<rect x="705" y="242" width="1" height="339"/>
</g>
<g fill="#fff" font-family="Liberation Sans,sans-serif" font-weight="bold" font-size="5.4" text-anchor="middle" shape-rendering="auto">
<text x="420" y="252.9">1</text><text x="524.5" y="252.9">4545</text><text x="646" y="252.9">4545</text>
<text x="420" y="269.4">2</text><text x="524.5" y="269.4">12</text><text x="646" y="269.4">6</text>
<text x="420" y="286.4">3</text><text x="524.5" y="286.4">515</text><text x="646" y="286.4">155</text>
<text x="420" y="303.4">4</text><text x="524.5" y="303.4">5345345</text><text x="646" y="303.4">1411451,55</text>
<text x="420" y="319.9">5</text><text x="524.5" y="319.9">545</text><text x="646" y="319.9">159</text>
<text x="420" y="336.9">6</text><text x="524.5" y="336.9">555</text><text x="646" y="336.9">92,5555555557</text>
<text x="420" y="353.9">7</text><text x="524.5" y="353.9">98750</text><text x="646" y="353.9">14467,1428571429</text>
<text x="420" y="370.9">8</text><text x="524.5" y="370.9">2,65</text><text x="646" y="370.9">0,33175</text>
<text x="420" y="387.9">9</text><text x="524.5" y="387.9">556</text><text x="646" y="387.9">61,5555555556</text>
<text x="420" y="404.9">10</text><text x="524.5" y="404.9">5563</text><text x="646" y="404.9">556,3</text>
<text x="420" y="421.9">11</text><text x="524.5" y="421.9">69742</text><text x="646" y="421.9">6340,1818181818</text>
<text x="420" y="438.9">12</text><text x="524.5" y="438.9">455</text><text x="646" y="438.9">35</text>
<text x="420" y="455.9">13</text><text x="524.5" y="455.9">124</text><text x="646" y="455.9">9,5384615385</text>
<text x="420" y="472.9">14</text><text x="524.5" y="472.9">354</text><text x="646" y="472.9">25,2857142857</text>
<text x="420" y="489.9">15</text><text x="524.5" y="489.9">53</text><text x="646" y="489.9">3,5333333333</text>
<text x="420" y="506.4">16</text><text x="524.5" y="506.4">47</text><text x="646" y="506.4">2,9375</text>
<text x="420" y="522.9">17</text><text x="524.5" y="522.9">9563</text><text x="646" y="522.9">562,5294117647</text>
<text x="420" y="539.9">18</text><text x="524.5" y="539.9">251</text><text x="646" y="539.9">13,9444444444</text>
<text x="420" y="556.9">19</text><text x="524.5" y="556.9">420</text><text x="646" y="556.9">22,1052631579</text>
<text x="420" y="573.9">20</text><text x="524.5" y="573.9">155</text><text x="646" y="573.9">7,5</text>
</g>
<g stroke="#fff" stroke-width="1" fill="none"><path d="M329.500 554V602M333 605.500H382"/><rect x="324.500" y="601.500" width="9" height="9"/><path d="M332 554.500l3.500 4l3.500-4M335.500 558.500v4.500" shape-rendering="auto"/><path d="M373 595l8 8M381 595l-8 8" shape-rendering="auto"/></g>
</svg>
<div class="abs" style="left:309px;top:626px;width:1052px;height:16px;background:#f0f0f0"></div>
<svg class="abs" style="left:309px;top:626px" width="240" height="16" viewBox="0 0 240 16">
 <rect x="63" y="0" width="170" height="15" fill="#f4f4f4"/>
 <path d="M65.500 0 L72 15 H112.500 L117 0Z" fill="#fff"/>
 <g fill="#e8e8e8" stroke="#a0a0a0" stroke-width="1"><rect x=".5" y=".5" width="15" height="14"/><rect x="16.500" y=".5" width="15" height="14"/><rect x="32.500" y=".5" width="15" height="14"/><rect x="48.500" y=".5" width="15" height="14"/></g>
 <g fill="#111"><rect x="4" y="3.500" width="1.500" height="8"/><path d="M11.500 3.500v8l-5-4z"/><path d="M27 3.500v8l-5-4z"/><path d="M37 3.500v8l5-4z"/><path d="M52.500 3.500v8l5-4z"/><rect x="58" y="3.500" width="1.500" height="8"/></g>
 <path d="M65.500 0 L72 15 H112.500 L117 0 M114 5.500 L120 15 H166.500 L170.500 0 M169.500 5.500 L175 15 H223.500 L230.500 0" stroke="#222" stroke-width="1" fill="none"/>
 <text x="76" y="12" font-family="Liberation Sans,sans-serif" font-weight="bold" font-size="11.200" fill="#000">Model</text>
 <text x="126" y="12" font-family="Liberation Sans,sans-serif" font-size="11.200" fill="#111">Układ1</text>
 <text x="182" y="12" font-family="Liberation Sans,sans-serif" font-size="11.200" fill="#111">Układ2</text>
</svg>
</div>

<div id="dlg">
<div class="abs" style="left:713px;top:132px;width:622px;height:459px;background:#f0f0f0;border:1px solid #1883d7;box-shadow:0 0 5px rgba(0,0,0,.18)"></div>
<div class="abs" style="left:714px;top:133px;width:620px;height:30px;background:#fff"></div>
<div class="abs" style="left:722px;top:141px;font-size:11.6px;color:#000">Wstaw tabelę</div>
<div class="gb" style="left:725px;top:180px;width:303px;height:39px"><span>Styl tabeli</span></div>
<div class="dcombo" style="left:737px;top:191px;width:123px;height:21px">Standard</div>
<div class="dbtn" style="left:865px;top:190px;width:27px;height:24px"></div>
<div class="gb" style="left:725px;top:231px;width:303px;height:110px"><span>Opcje wstawiania</span></div>
<div class="radio on" style="left:740px;top:246px"></div><div class="dt" style="left:755px;top:245px">Rozpocznij od pustej tabeli</div>
<div class="radio" style="left:740px;top:292px"></div><div class="dt" style="left:755px;top:291px">Z pliku CSV</div>
<div class="radio" style="left:740px;top:316px"></div><div class="dt" style="left:755px;top:315px">Z danych obiektu w rysunku (ekstrakcja danych)</div>
<div class="gb" style="left:725px;top:360px;width:303px;height:213px"></div>
<div class="abs" style="left:733px;top:353px;width:60px;height:14px;background:#f0f0f0"></div>
<div class="abs" style="left:735px;top:354px;width:13px;height:13px;border:1px solid #333;background:#fff"></div>
<svg class="abs" style="left:735px;top:354px" width="13" height="13" viewBox="0 0 13 13"><path d="M2.500 6.500l2.800 3l5-6.500" fill="none" stroke="#222" stroke-width="1.300"/></svg>
<div class="dt" style="left:750px;top:353px">Podgląd</div>
<div class="abs" style="left:740px;top:376px;width:271px;height:187px;background:#000;border:1px solid #a0a0a0;border-right-color:#fff;border-bottom-color:#fff"></div>
<svg class="abs" style="left:741px;top:377px" width="269" height="185" viewBox="741 377 269 185" shape-rendering="crispEdges">
<rect x="754" y="456" width="245" height="28" fill="#fff"/>
<g fill="#000"><rect x="755" y="458" width="243" height="1"/><rect x="755" y="460" width="243" height="1"/><rect x="755" y="465" width="243" height="1"/><rect x="755" y="469" width="243" height="1"/><rect x="755" y="473" width="243" height="1"/><rect x="755" y="478" width="243" height="1"/><rect x="755" y="482" width="243" height="1"/></g>
<g fill="#fff"><rect x="794" y="459" width="2" height="25"/><rect x="835" y="459" width="1" height="25"/><rect x="876" y="456" width="2" height="28"/><rect x="917" y="459" width="1" height="25"/><rect x="957" y="459" width="2" height="25"/></g>
</svg>
<svg class="abs" style="left:866px;top:191px" width="25" height="22" viewBox="866 191 25 22">
<rect x="871.500" y="195.500" width="12" height="11" rx="1" fill="#fff" stroke="#333" stroke-width="1.200"/><rect x="872" y="196" width="11" height="1.800" fill="#8a96b4"/>
<path d="M872 199.500h11M872 202.500h11M875.500 198v8M879.500 198v8" stroke="#bbb" stroke-width="1"/>
<path d="M885.500 200.500l-4.500 5.500" stroke="#d08a10" stroke-width="1.500" stroke-dasharray="1.500 1"/>
<path d="M876 209q2-5 6-4.500l1.500 1.500q-2 3.500-7.500 3z" fill="#9a5010"/>
</svg>

<div class="gb" style="left:1040px;top:180px;width:284px;height:61px"><span>Wstawianie</span></div>
<div class="radio on" style="left:1050px;top:193px"></div><div class="dt" style="left:1065px;top:192px">Określ punkt wstawiania</div>
<div class="radio" style="left:1050px;top:217px"></div><div class="dt" style="left:1065px;top:216px">Określ okno</div>
<div class="gb" style="left:1040px;top:257px;width:284px;height:126px"><span>Ustawienia kolumny i wiersza</span></div>
<div class="dt" style="left:1067px;top:270px">Kolumny:</div>
<div class="dt" style="left:1190px;top:270px">Szerokość kolumny:</div>
<div class="din" style="left:1068px;top:290px">3</div>
<div class="din" style="left:1191px;top:290px">22.48677248677</div>
<div class="dt" style="left:1067px;top:327px">Wiersze danych:</div>
<div class="dt" style="left:1190px;top:327px">Wysokość wiersza:</div>
<div class="din" style="left:1068px;top:343px">18</div>
<div class="din" style="left:1191px;top:343px">1</div>
<div class="gb" style="left:1040px;top:406px;width:284px;height:95px"><span>Ustawienia stylu komórek</span></div>
<div class="dt" style="left:1046px;top:421px">Styl komórki pierwszego rzędu:</div>
<div class="dt" style="left:1046px;top:447px">Styl komórki drugiego rzędu:</div>
<div class="dt" style="left:1046px;top:473px">Style komórek dalszych rzędów:</div>
<div class="dcombo" style="left:1214px;top:418px;width:104px;height:20px;line-height:18px">Tytuł</div>
<div class="dcombo" style="left:1214px;top:444px;width:104px;height:20px;line-height:18px">Nagłówek</div>
<div class="dcombo" style="left:1214px;top:470px;width:104px;height:20px;line-height:18px">Dane</div>
<div class="dbtn" style="left:1167px;top:557px;width:73px;height:21px;border:2px solid #0078d7;line-height:17px">OK</div>
<div class="dbtn" style="left:1249px;top:557px;width:73px;height:21px;line-height:19px">Anuluj</div>
</div>

<div id="cmd">
<div class="abs" style="left:0;top:647px;width:1370px;height:5px;background:#f0f0f0;border-top:1px solid #b4b4b4"></div>
<div class="abs" style="left:0;top:652px;width:1366px;height:2px;background:linear-gradient(#a8a8a8,#707070)"></div>
<div class="abs" style="left:2px;top:654px;width:17px;height:58px;background:#b4b4b4"></div>
<svg class="abs" style="left:2px;top:653px" width="17" height="59" viewBox="0 0 17 59"><path d="M4.500 6l7 7M11.500 6l-7 7" stroke="#333" stroke-width="1"/><path d="M6.500 24.500h4v5h-4zM5 29.500h7M8.500 29.500v4" fill="none" stroke="#333" stroke-width="1"/></svg>
<div class="abs" style="left:20px;top:654px;width:1345px;height:36px;background:#fff;border-left:1px solid #777"></div>
<div class="abs" style="left:20px;top:690px;width:1345px;height:1px;background:#555"></div>
<div class="abs" style="left:20px;top:691px;width:1345px;height:20px;background:#fff;border-left:1px solid #777"></div>
<div class="abs" style="left:1348px;top:654px;width:17px;height:36px;background:#f0f0f0"></div>
<svg class="abs" style="left:1348px;top:653px" width="17" height="37" viewBox="0 0 17 37"><path d="M5 12l3.500-3.500l3.500 3.500M5 25l3.500 3.500l3.500-3.500" fill="none" stroke="#444" stroke-width="1.600"/></svg>
<div class="abs" style="left:23px;top:654px;font-family:'Liberation Mono',monospace;font-size:13.2px;line-height:14px;color:#000;white-space:pre">Polecenie: _PASTECLIP
Wklej punkt:</div>
<div class="abs" style="left:25px;top:694px;font-family:'Liberation Mono',monospace;font-size:11.55px;line-height:14px;color:#000;white-space:pre">Polecenie: _TABLE</div>
</div>
<div id="status">
<div class="abs" style="left:0;top:711px;width:1370px;height:2px;background:#f7f7f7"></div>
<div class="abs" style="left:0;top:713px;width:1366px;height:24px;background:#dcdcdc"></div>
<div class="abs" style="left:4px;top:719px;font-size:11.7px;color:#111;white-space:nowrap">Tworzy pusty obiekt tabeli</div>
<div class="abs" style="left:735px;top:719px;font-size:10.75px;color:#111;white-space:nowrap">38.3748,195.8864,0</div>
<div class="abs" style="left:910px;top:719px;font-size:10.2px;letter-spacing:-.2px;color:#111;white-space:nowrap">1:1</div>
<div class="abs" style="left:1200px;top:720px;font-size:10.4px;color:#111;white-space:nowrap">MOBSZAR</div>
<div class="ssep" style="left:730px"></div><div class="ssep" style="left:876px"></div><div class="ssep" style="left:925px"></div><div class="ssep" style="left:955px"></div><div class="ssep" style="left:985px"></div><div class="ssep" style="left:1015px"></div><div class="ssep" style="left:1045px"></div><div class="ssep" style="left:1075px"></div><div class="ssep" style="left:1105px"></div><div class="ssep" style="left:1135px"></div><div class="ssep" style="left:1165px"></div><div class="ssep" style="left:1195px"></div><div class="ssep" style="left:1253px"></div><div class="ssep" style="left:1283px"></div><div class="ssep" style="left:1313px"></div><div class="ssep" style="left:1343px"></div>
<svg class="abs" style="left:870px;top:713px" width="500" height="24" viewBox="870 713 500 24">
<defs>
 <radialGradient id="gb" cx=".4" cy=".3" r=".8"><stop offset="0" stop-color="#9fe07a"/><stop offset=".5" stop-color="#3faa30"/><stop offset="1" stop-color="#1a7018"/></radialGradient>
 <path id="st" d="M0 -8.500 C1.200 -3 3 1 8.500 8.500 C4 7.500 1.500 6.500 0 4.500 C-1.500 6.500 -4 7.500 -8.500 8.500 C-3 1 -1.200 -3 0 -8.500Z"/>
 <filter id="bl" x="-30%" y="-30%" width="160%" height="160%"><feGaussianBlur stdDeviation="1.200"/></filter>
</defs>
<use href="#st" x="893.500" y="727.200" fill="#fbfbfb" stroke="#8a8a8a" stroke-width="1"/>
<use href="#st" x="941.500" y="726.200" fill="#6a86f8" filter="url(#bl)"/>
<use href="#st" x="941.500" y="726.200" fill="#6e88f6" stroke="#5a78f0" stroke-width=".8"/>
<circle cx="947" cy="728.500" r="3.800" fill="#f8e020"/><rect x="945.500" y="731.500" width="3" height="3" fill="#e8c810"/><rect x="946" y="734.500" width="2" height="1.500" fill="#333"/>
<use href="#st" x="972.500" y="727.200" fill="#fbfbfb" stroke="#8a8a8a" stroke-width="1"/>
<path d="M980 717.500l-3.500 4h2l-2 3.500l5-4.500h-2.200l2.500-3z" fill="#e8c020"/>
<g fill="#b0b2c0"><circle cx="995" cy="720" r="1.300"/><circle cx="1001.700" cy="720" r="1.300"/><circle cx="1008.400" cy="720" r="1.300"/><circle cx="995" cy="726.500" r="1.300"/><circle cx="1001.700" cy="726.500" r="1.300"/><circle cx="1008.400" cy="726.500" r="1.300"/><circle cx="995" cy="733" r="1.300"/><circle cx="1001.700" cy="733" r="1.300"/><circle cx="1008.400" cy="733" r="1.300"/></g>
<g fill="#5c72f4"><rect x="1025" y="717" width="2.600" height="20"/><rect x="1037" y="717" width="2.600" height="20"/><rect x="1022" y="719.200" width="20" height="2.600"/><rect x="1022" y="729.500" width="20" height="2.600"/></g>
<path d="M1053 734.500h17M1069.500 718v17M1061.500 734v-6.500h8" fill="none" stroke="#aaa" stroke-width="1.200"/>
<circle cx="1092" cy="727" r="7.500" fill="none" stroke="#5c72f4" stroke-width="2.600"/><path d="M1099 720l-7 7.500h8.500" fill="none" stroke="#e02040" stroke-width="1.200"/>
<rect x="1115.500" y="720.500" width="13.500" height="13" fill="none" stroke="#5c72f4" stroke-width="2.600"/><rect x="1127.500" y="717.500" width="4.500" height="4.500" fill="#10e010" stroke="#111" stroke-width="1"/>
<path d="M1147 721.500l12.500 11.500h-15.500" fill="none" stroke="#5c72f4" stroke-width="3" stroke-linejoin="round" stroke-linecap="round"/>
<g fill="#a9adb4"><rect x="1172" y="718" width="20" height="1"/><rect x="1172" y="722.500" width="20" height="3.200"/><rect x="1172" y="730" width="20" height="4.600"/></g>
<g fill="#6a7cff"><circle cx="1270" cy="726.500" r="7.800"/><g transform="translate(1270 726.500)"><rect x="-2.300" y="-10.300" width="4.600" height="20.600" rx=".8"/><rect x="-2.300" y="-10.300" width="4.600" height="20.600" rx=".8" transform="rotate(45)"/><rect x="-2.300" y="-10.300" width="4.600" height="20.600" rx=".8" transform="rotate(90)"/><rect x="-2.300" y="-10.300" width="4.600" height="20.600" rx=".8" transform="rotate(135)"/></g></g><circle cx="1270" cy="726.500" r="2.800" fill="#dcdcdc"/>
<path d="M1290 722h9M1294.500 717.500v9" stroke="#3a68f0" stroke-width="2.200"/><rect x="1295" y="729" width="15" height="5.600" rx=".8" fill="#6a7cff"/><rect x="1296.500" y="730.500" width="1.800" height="2.800" fill="#fff"/>
<path d="M1321.500 718v17h17M1321.500 735l11-10" fill="none" stroke="#adb1ba" stroke-width="1.300"/>
<path d="M1338 717l-3.500 4h2l-2 3.500l5-4.500h-2.200l2.500-3z" fill="#e8c020"/>
<circle cx="1356.300" cy="726" r="8" fill="url(#gb)" stroke="#2a7a20" stroke-width=".6"/><path d="M1351.500 726l3.200 3.200l6-6.500" fill="none" stroke="#fff" stroke-width="2.200"/>
</svg>

</div>

<!--STATUS-->
<div class="abs" style="left:1366px;top:0;width:4px;height:737px;background:#fff"></div>
</body></html>
